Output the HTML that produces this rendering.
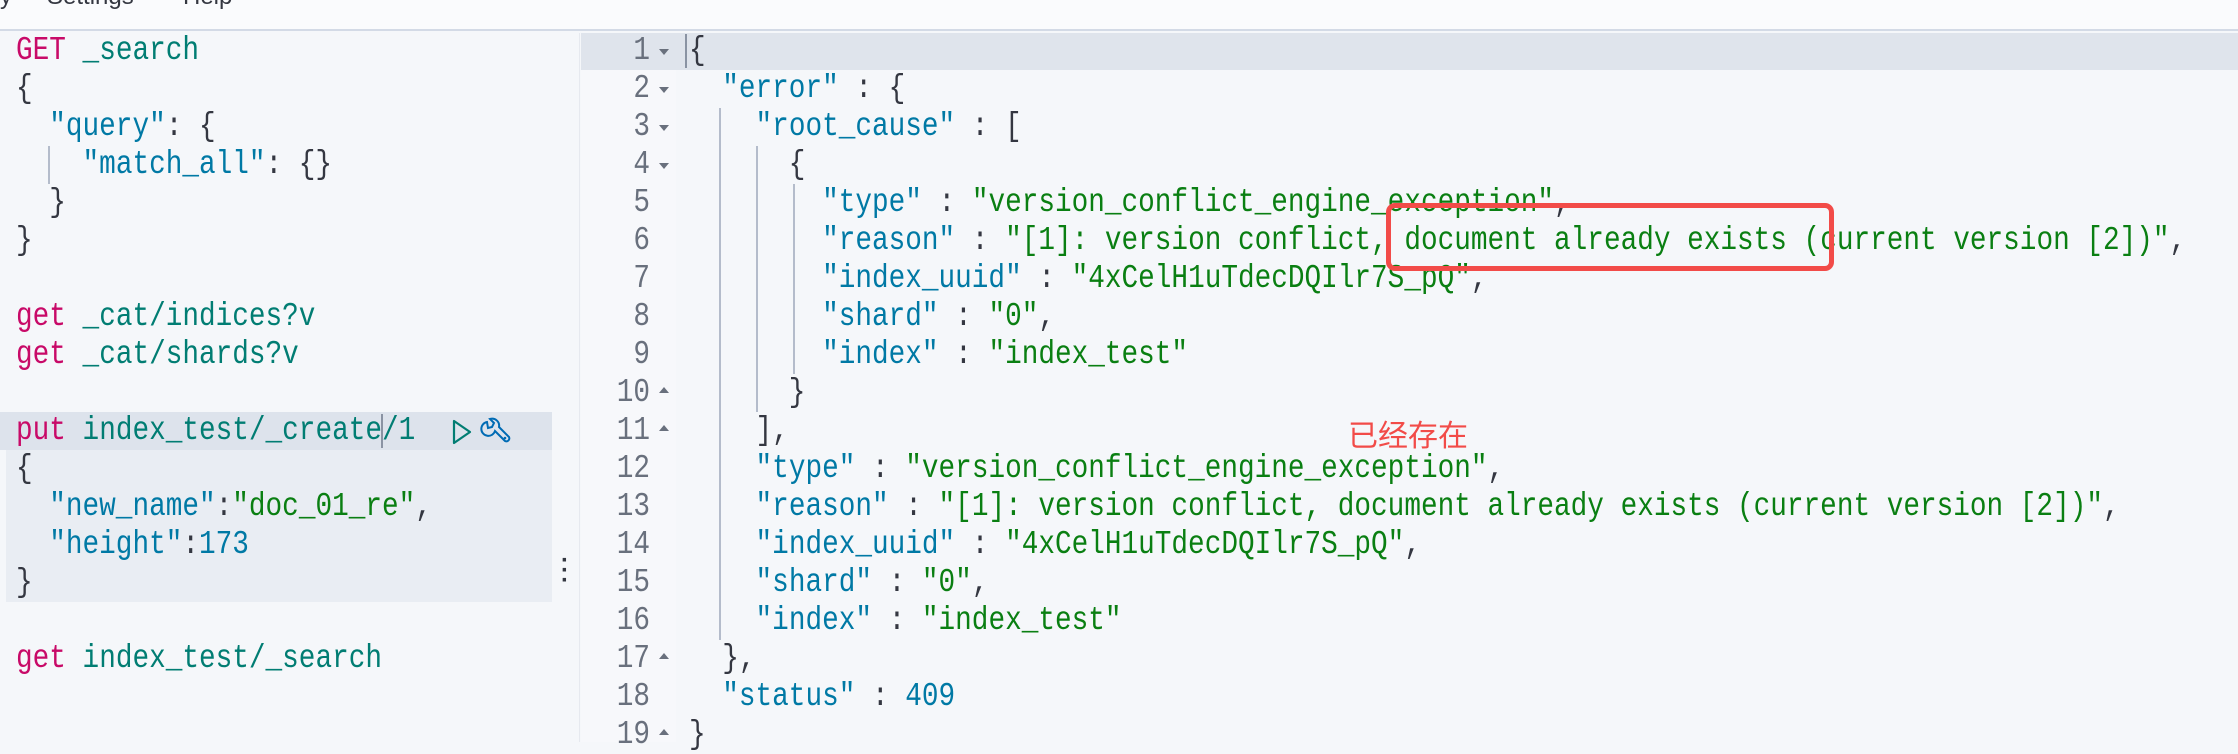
<!DOCTYPE html>
<html><head><meta charset="utf-8"><style>
*{margin:0;padding:0;box-sizing:border-box}
body{width:2238px;height:742px;overflow:hidden;background:#f5f7fa;position:relative;font-family:"Liberation Mono",monospace;font-size:27.7px;color:#343741}
.top{position:absolute;left:0;top:0;width:2238px;height:31px;background:#fafbfd;border-bottom:2px solid #d3dae6;overflow:hidden}
.top span{position:absolute;top:-17px;font:24px "Liberation Sans",sans-serif;color:#343741}
.l{position:absolute;height:38px;line-height:38px;white-space:pre;font-size:33px;transform:scaleX(0.84);transform-origin:0 50%}
.m{color:#c80a68}.u{color:#017d73}.k{color:#0079a5}.s{color:#0a7f12}.n{color:#0079a5}
.g{position:absolute;width:2px;background:#b4bccb}
.num{position:absolute;width:70px;text-align:right;left:580px;color:#69707d;height:38px;line-height:38px;font-size:33px;transform:scaleX(0.84);transform-origin:100% 50%}
.ar{position:absolute;left:659px;width:0;height:0;border-left:5px solid transparent;border-right:5px solid transparent}
.dn{border-top:6px solid #69707d}.up{border-bottom:6px solid #69707d}
</style></head><body>
<div class="top"><span style="left:0">y</span><span style="left:47px">Settings</span><span style="left:183px">Help</span></div>

<div style="position:absolute;left:0;top:33px;width:552px;height:709px;background:#f5f7fa"></div>
<div style="position:absolute;left:6px;top:450px;width:546px;height:152px;background:#e9edf3"></div>
<div style="position:absolute;left:0;top:412px;width:552px;height:38px;background:#dde3ec"></div>
<div style="position:absolute;left:552px;top:33px;width:28px;height:709px;background:#f5f7fa;border-right:1px solid #e6e9ef"></div>
<div style="position:absolute;left:561px;top:556px;color:#343741;font:bold 24px 'Liberation Sans',sans-serif;line-height:10px">·<br>·<br>·</div>

<div class="l" style="left:16px;top:32px"><span class="m">GET</span> <span class="u">_search</span></div>
<div class="l" style="left:16px;top:70px">{</div>
<div class="l" style="left:16px;top:108px">  <span class="k">"query"</span>: {</div>
<div class="l" style="left:16px;top:146px">    <span class="k">"match_all"</span>: {}</div>
<div class="g" style="left:48px;top:146px;height:38px"></div>
<div class="l" style="left:16px;top:184px">  }</div>
<div class="l" style="left:16px;top:222px">}</div>
<div class="l" style="left:16px;top:298px"><span class="m">get</span> <span class="u">_cat/indices?v</span></div>
<div class="l" style="left:16px;top:336px"><span class="m">get</span> <span class="u">_cat/shards?v</span></div>
<div class="l" style="left:16px;top:412px"><span class="m">put</span> <span class="u">index_test/_create/1</span></div>
<div class="g" style="left:381px;top:414px;height:34px;background:#8a93a3"></div>
<svg style="position:absolute;left:450px;top:416px" width="70" height="34" viewBox="0 0 70 34">
<path d="M4 5 L4 27 L20 16 Z" fill="none" stroke="#017d73" stroke-width="2.2" stroke-linejoin="round"/>
<path d="M37 6 a7 7 0 1 0 8 9 l10 10 a3 3 0 0 0 4 -4 l-10 -10 a7 7 0 0 0 -9 -8 l4 4 -2 4 -4 1 z" fill="none" stroke="#006bb4" stroke-width="2"/>
<circle cx="55" cy="22" r="1.3" fill="#006bb4"/>
</svg>
<div class="l" style="left:16px;top:450px">{</div>
<div class="l" style="left:16px;top:488px">  <span class="k">"new_name"</span>:<span class="s">"doc_01_re"</span>,</div>
<div class="l" style="left:16px;top:526px">  <span class="k">"height"</span>:<span class="n">173</span></div>
<div class="l" style="left:16px;top:564px">}</div>
<div class="l" style="left:16px;top:640px"><span class="m">get</span> <span class="u">index_test/_search</span></div>

<div style="position:absolute;left:581px;top:33px;width:95px;height:709px;background:#f7f8fb"></div>
<div style="position:absolute;left:581px;top:33px;width:1657px;height:37px;background:#dfe4ec"></div>
<div class="g" style="left:685px;top:34px;height:34px;background:#8a93a3"></div>

<div class="num" style="top:32px">1</div><div class="ar dn" style="top:49px"></div>
<div class="num" style="top:70px">2</div><div class="ar dn" style="top:87px"></div>
<div class="num" style="top:108px">3</div><div class="ar dn" style="top:125px"></div>
<div class="num" style="top:146px">4</div><div class="ar dn" style="top:163px"></div>
<div class="num" style="top:184px">5</div>
<div class="num" style="top:222px">6</div>
<div class="num" style="top:260px">7</div>
<div class="num" style="top:298px">8</div>
<div class="num" style="top:336px">9</div>
<div class="num" style="top:374px">10</div><div class="ar up" style="top:387px"></div>
<div class="num" style="top:412px">11</div><div class="ar up" style="top:425px"></div>
<div class="num" style="top:450px">12</div>
<div class="num" style="top:488px">13</div>
<div class="num" style="top:526px">14</div>
<div class="num" style="top:564px">15</div>
<div class="num" style="top:602px">16</div>
<div class="num" style="top:640px">17</div><div class="ar up" style="top:653px"></div>
<div class="num" style="top:678px">18</div>
<div class="num" style="top:716px">19</div><div class="ar up" style="top:729px"></div>

<div class="g" style="left:719px;top:108px;height:532px"></div>
<div class="g" style="left:756px;top:146px;height:266px"></div>
<div class="g" style="left:793px;top:184px;height:190px"></div>

<div class="l" style="left:689px;top:32px">{</div>
<div class="l" style="left:689px;top:70px">  <span class="k">"error"</span> : {</div>
<div class="l" style="left:689px;top:108px">    <span class="k">"root_cause"</span> : [</div>
<div class="l" style="left:689px;top:146px">      {</div>
<div class="l" style="left:689px;top:184px">        <span class="k">"type"</span> : <span class="s">"version_conflict_engine_exception"</span>,</div>
<div class="l" style="left:689px;top:222px">        <span class="k">"reason"</span> : <span class="s">"[1]: version conflict, document already exists (current version [2])"</span>,</div>
<div class="l" style="left:689px;top:260px">        <span class="k">"index_uuid"</span> : <span class="s">"4xCelH1uTdecDQIlr7S_pQ"</span>,</div>
<div class="l" style="left:689px;top:298px">        <span class="k">"shard"</span> : <span class="s">"0"</span>,</div>
<div class="l" style="left:689px;top:336px">        <span class="k">"index"</span> : <span class="s">"index_test"</span></div>
<div class="l" style="left:689px;top:374px">      }</div>
<div class="l" style="left:689px;top:412px">    ],</div>
<div class="l" style="left:689px;top:450px">    <span class="k">"type"</span> : <span class="s">"version_conflict_engine_exception"</span>,</div>
<div class="l" style="left:689px;top:488px">    <span class="k">"reason"</span> : <span class="s">"[1]: version conflict, document already exists (current version [2])"</span>,</div>
<div class="l" style="left:689px;top:526px">    <span class="k">"index_uuid"</span> : <span class="s">"4xCelH1uTdecDQIlr7S_pQ"</span>,</div>
<div class="l" style="left:689px;top:564px">    <span class="k">"shard"</span> : <span class="s">"0"</span>,</div>
<div class="l" style="left:689px;top:602px">    <span class="k">"index"</span> : <span class="s">"index_test"</span></div>
<div class="l" style="left:689px;top:640px">  },</div>
<div class="l" style="left:689px;top:678px">  <span class="k">"status"</span> : <span class="n">409</span></div>
<div class="l" style="left:689px;top:716px">}</div>

<div style="position:absolute;left:1386px;top:203px;width:448px;height:68px;border:5px solid #f24b48;border-radius:9px"></div>
<div style="position:absolute;left:1348px;top:414px;font:30px 'Noto Sans CJK SC',sans-serif;color:#f24b48;line-height:38px">已经存在</div>
</body></html>
